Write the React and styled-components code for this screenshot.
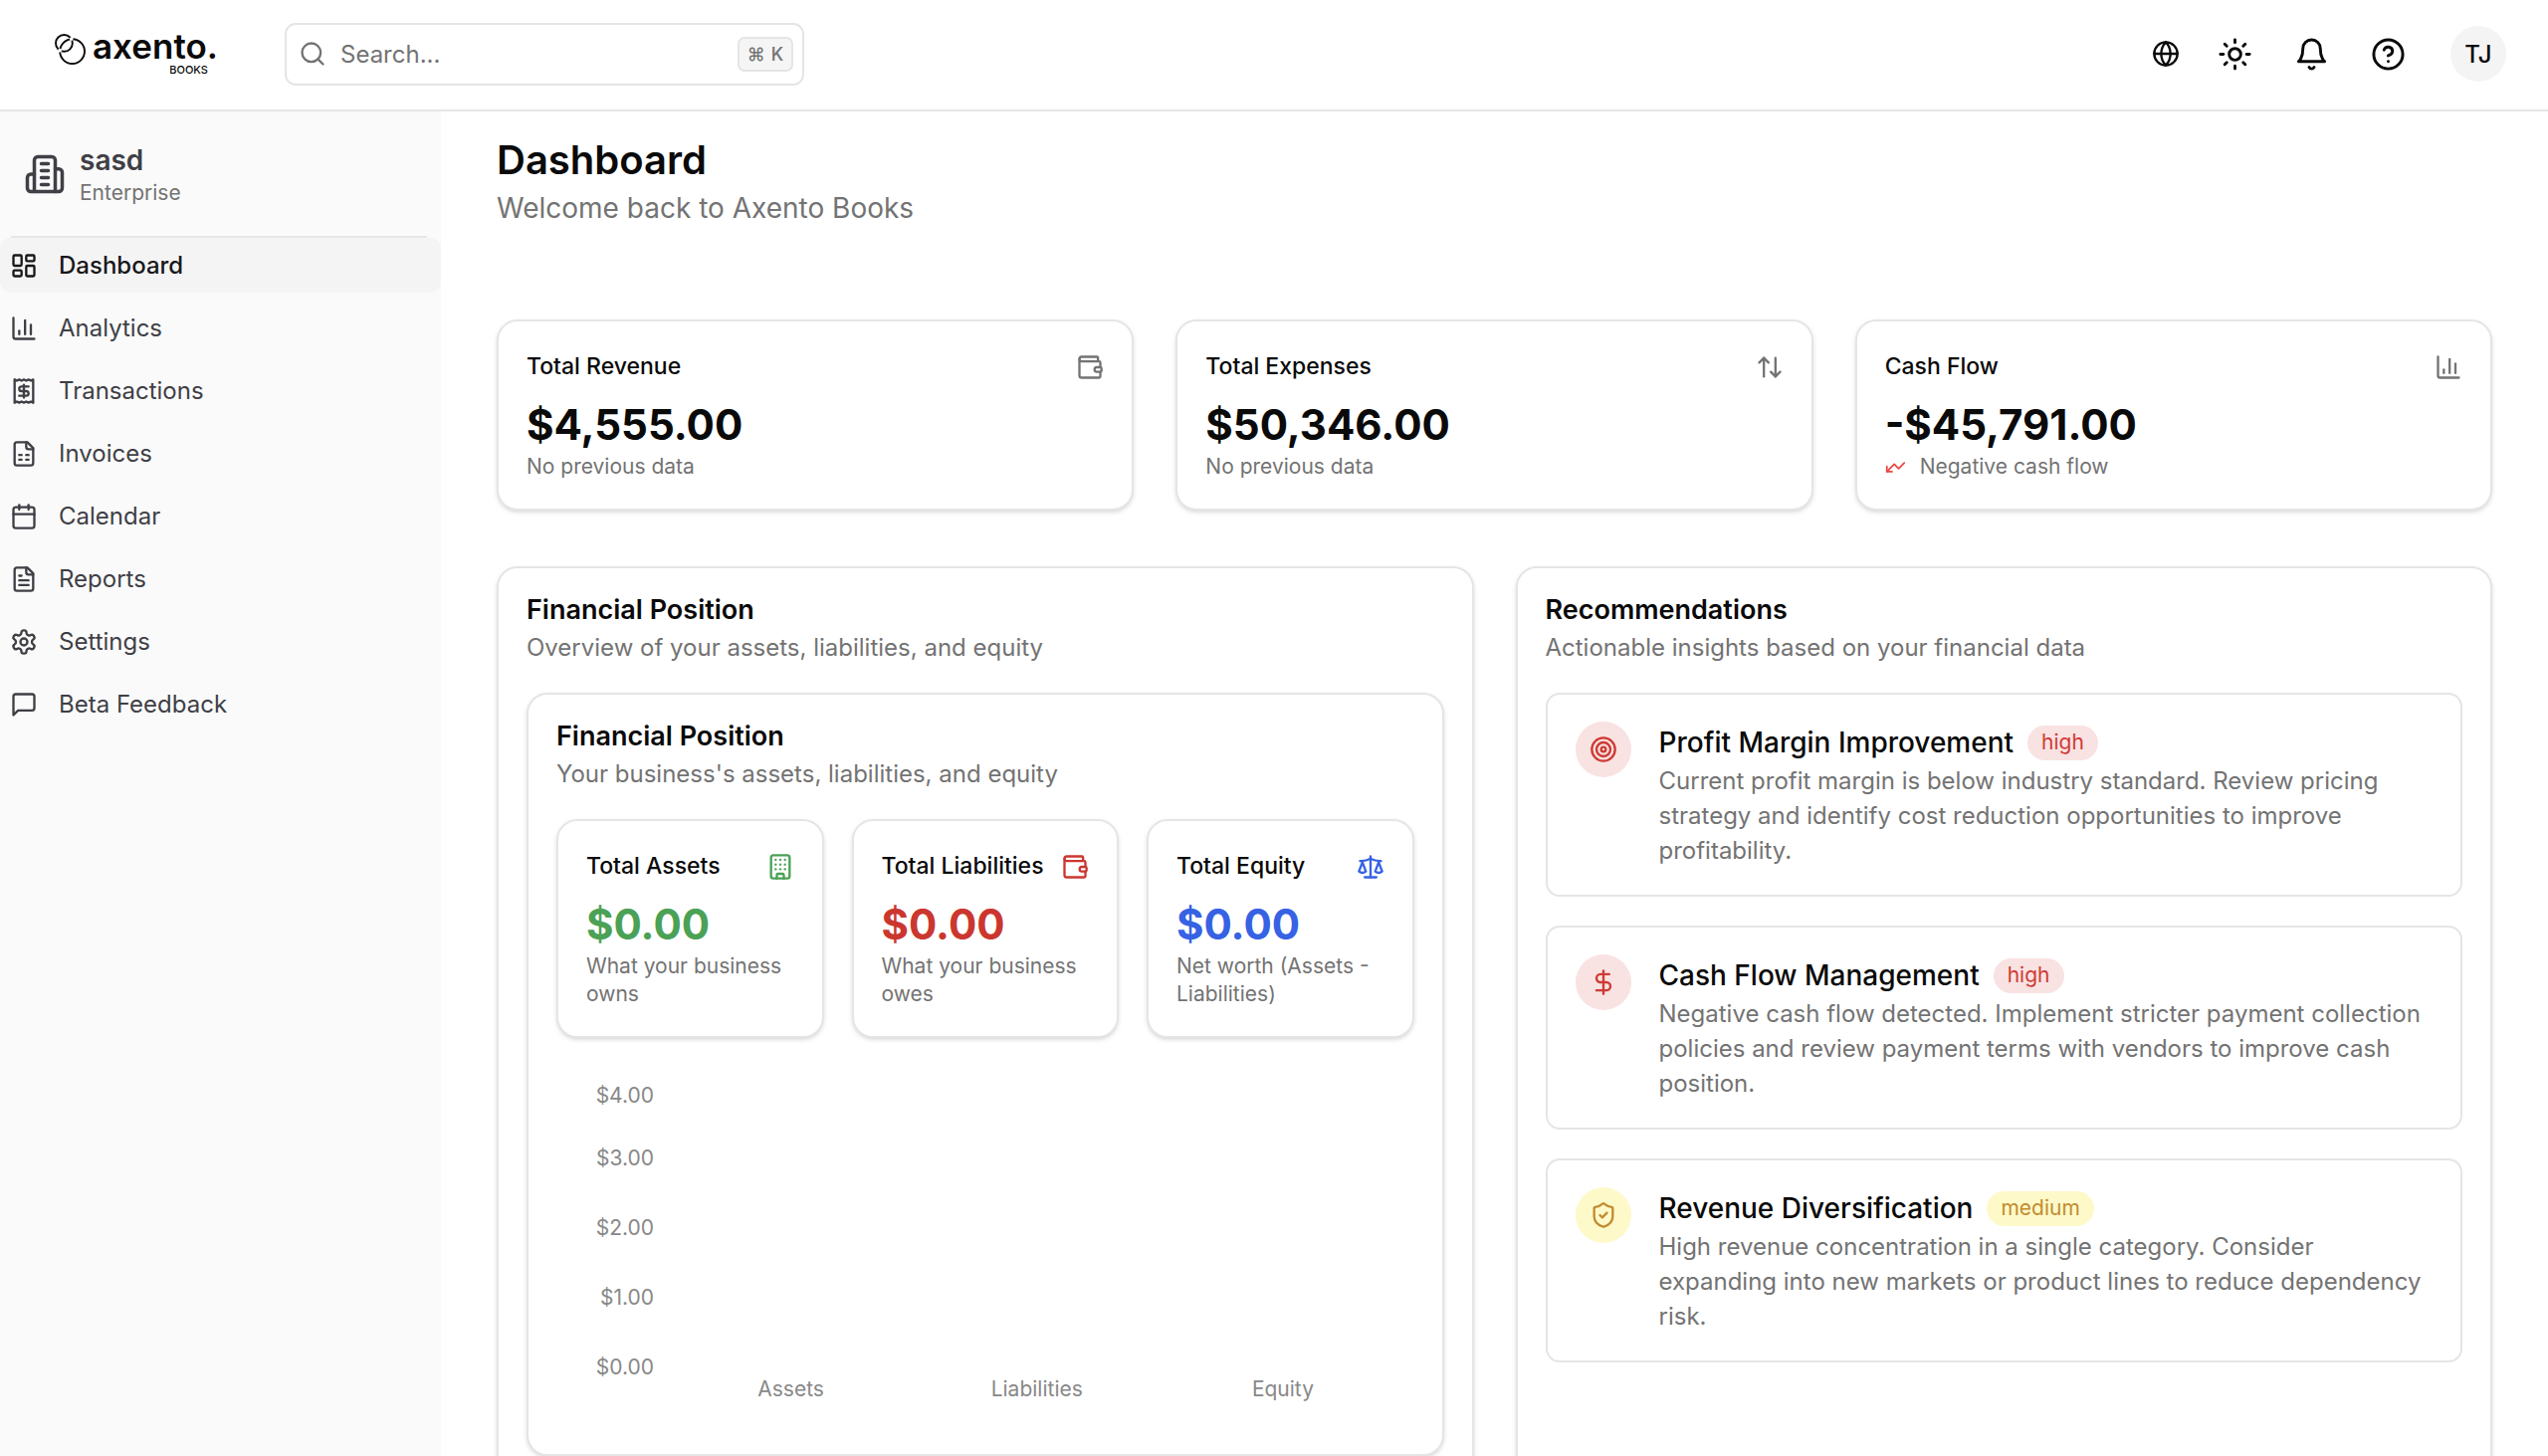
import React, { useCallback, useState } from "react";
import styled, { createGlobalStyle, css } from "styled-components";
import {
  ArrowUpDown,
  Building,
  Calendar,
  ChartColumn,
  CircleHelp,
  DollarSign,
  Globe,
  LayoutDashboard,
  Receipt,
  Scale,
  Search,
  ShieldCheck,
  Sun,
  Target,
  TrendingUp,
  Wallet,
} from "lucide-react";

const GlobalStyle = createGlobalStyle`
  * {
    box-sizing: border-box;
  }
  body {
    margin: 0;
    background: #fff;
    color: #0a0a0a;
    font-family: Inter, "Liberation Sans", sans-serif;
    font-size: 24px;
    line-height: 35px;
  }
  h1, h2, h3, p, ul {
    margin: 0;
    padding: 0;
  }
  svg {
    display: block;
    flex-shrink: 0;
  }
`;

const muted = "#737373";
const border = "#e5e5e5";

const tones = {
  green: "#4ba155",
  red: "#cb372f",
  blue: "#3662e3",
};

const priorities = {
  high: { color: "#cf3a34", background: "#f9e2e2" },
  medium: { color: "#c28c30", background: "#fdf9c9" },
};

/* icons */

const StrokeIcon = ({ size = 28, children }) => (
  <svg
    width={size}
    height={size}
    viewBox="0 0 24 24"
    fill="none"
    stroke="currentColor"
    strokeWidth="2"
    strokeLinecap="round"
    strokeLinejoin="round"
    aria-hidden="true"
  >
    {children}
  </svg>
);

const OfficeIcon = ({ size }) => (
  <StrokeIcon size={size}>
    <path d="M6 22V4a2 2 0 0 1 2-2h8a2 2 0 0 1 2 2v18Z" />
    <path d="M6 12H4a2 2 0 0 0-2 2v6a2 2 0 0 0 2 2h2" />
    <path d="M18 9h2a2 2 0 0 1 2 2v9a2 2 0 0 1-2 2h-2" />
    <path d="M10 6h4M10 10h4M10 14h4M10 18h4" />
  </StrokeIcon>
);

const BellIcon = ({ size }) => (
  <StrokeIcon size={size}>
    <path d="M6 8a6 6 0 0 1 12 0c0 7 3 9 3 9H3s3-2 3-9" />
    <path d="M10.3 21a1.94 1.94 0 0 0 3.4 0" />
  </StrokeIcon>
);

const InvoiceIcon = ({ size }) => (
  <StrokeIcon size={size}>
    <path d="M15 2H6a2 2 0 0 0-2 2v16a2 2 0 0 0 2 2h12a2 2 0 0 0 2-2V7Z" />
    <path d="M14 2v4a2 2 0 0 0 2 2h4" />
    <path d="M8 13h2M14 13h2M8 17h2M14 17h2" />
  </StrokeIcon>
);

const ReportIcon = ({ size }) => (
  <StrokeIcon size={size}>
    <path d="M15 2H6a2 2 0 0 0-2 2v16a2 2 0 0 0 2 2h12a2 2 0 0 0 2-2V7Z" />
    <path d="M14 2v4a2 2 0 0 0 2 2h4" />
    <path d="M10 9H8M16 13H8M16 17H8" />
  </StrokeIcon>
);

const GearIcon = ({ size }) => (
  <StrokeIcon size={size}>
    <path d="M12.22 2h-.44a2 2 0 0 0-2 2v.18a2 2 0 0 1-1 1.73l-.43.25a2 2 0 0 1-2 0l-.15-.08a2 2 0 0 0-2.73.73l-.22.38a2 2 0 0 0 .73 2.73l.15.1a2 2 0 0 1 1 1.72v.51a2 2 0 0 1-1 1.74l-.15.09a2 2 0 0 0-.73 2.73l.22.38a2 2 0 0 0 2.73.73l.15-.08a2 2 0 0 1 2 0l.43.25a2 2 0 0 1 1 1.73V20a2 2 0 0 0 2 2h.44a2 2 0 0 0 2-2v-.18a2 2 0 0 1 1-1.73l.43-.25a2 2 0 0 1 2 0l.15.08a2 2 0 0 0 2.73-.73l.22-.39a2 2 0 0 0-.73-2.73l-.15-.08a2 2 0 0 1-1-1.74v-.5a2 2 0 0 1 1-1.74l.15-.09a2 2 0 0 0 .73-2.73l-.22-.38a2 2 0 0 0-2.73-.73l-.15.08a2 2 0 0 1-2 0l-.43-.25a2 2 0 0 1-1-1.73V4a2 2 0 0 0-2-2z" />
    <circle cx="12" cy="12" r="3" />
  </StrokeIcon>
);

const MessageIcon = ({ size }) => (
  <StrokeIcon size={size}>
    <path d="M21 15a2 2 0 0 1-2 2H7l-4 4V5a2 2 0 0 1 2-2h14a2 2 0 0 1 2 2z" />
  </StrokeIcon>
);

const LogoMark = () => (
  <svg width="31" height="37" viewBox="0 0 31 37" fill="none" aria-hidden="true">
    <g stroke="#0a0a0a" strokeWidth="1.9">
      <circle cx="9.4" cy="9.4" r="8.4" />
      <circle cx="17.6" cy="17.6" r="12.4" />
    </g>
    <circle cx="16.7" cy="5.1" r="1.9" fill="#fff" />
    <circle cx="5.1" cy="16.7" r="1.9" fill="#fff" />
  </svg>
);

/* shell */

const Shell = styled.div`
  display: flex;
  flex-direction: column;
  height: 100vh;
`;

const Header = styled.header`
  display: flex;
  align-items: center;
  justify-content: space-between;
  flex-shrink: 0;
  height: 112px;
  padding: 0 42px 2px 55px;
  border-bottom: 2px solid ${border};
`;

const HeaderGroup = styled.div`
  display: flex;
  align-items: center;
`;

const Logo = styled.a`
  display: flex;
  align-items: center;
  gap: 7px;
  width: 231px;
  padding-bottom: 3px;
  color: #0a0a0a;
  text-decoration: none;
`;

const LogoText = styled.span`
  display: flex;
  flex-direction: column;
  align-items: flex-end;
`;

const LogoName = styled.span`
  font-size: 35px;
  font-weight: 600;
  line-height: 34px;
`;

const LogoProduct = styled.span`
  padding-right: 10px;
  font-size: 11px;
  font-weight: 500;
  line-height: 14px;
`;

const SearchBox = styled.label`
  display: flex;
  align-items: center;
  gap: 14px;
  width: 522px;
  height: 63px;
  padding: 0 9px 0 12px;
  border: 2px solid ${border};
  border-radius: 11px;
  color: ${muted};
`;

const SearchInput = styled.input`
  flex: 1;
  min-width: 0;
  padding: 0;
  border: 0;
  outline: 0;
  background: none;
  color: #0a0a0a;
  font: inherit;

  &::placeholder {
    color: ${muted};
    opacity: 1;
  }
`;

const Shortcut = styled.kbd`
  display: flex;
  align-items: center;
  gap: 6px;
  height: 35px;
  padding: 0 8px;
  border: 2px solid ${border};
  border-radius: 7px;
  background: #f5f5f5;
  font-family: inherit;
  font-size: 18px;
  font-weight: 500;
`;

const IconButton = styled.button`
  display: flex;
  align-items: center;
  justify-content: center;
  width: ${({ $compact }) => ($compact ? 49 : 63)}px;
  height: 63px;
  margin-right: 14px;
  padding: 0;
  border: 0;
  background: none;
  color: #0a0a0a;
  cursor: pointer;
`;

const Avatar = styled.button`
  width: 56px;
  height: 56px;
  margin-left: 17px;
  padding: 0;
  border: 0;
  border-radius: 50%;
  background: #f4f4f4;
  color: #0a0a0a;
  font: inherit;
  font-weight: 500;
  cursor: pointer;
`;

const Body = styled.div`
  display: flex;
  flex: 1;
  min-height: 0;
`;

/* sidebar */

const Sidebar = styled.aside`
  flex-shrink: 0;
  width: 443px;
  background: #fafafa;
  color: #3f3f46;
`;

const Company = styled.div`
  display: flex;
  align-items: center;
  gap: 14px;
  height: 125px;
  padding-left: 24px;
`;

const CompanyInfo = styled.div`
  padding-top: 4px;
`;

const CompanyName = styled.div`
  font-size: 28px;
  font-weight: 600;
  line-height: 35px;
`;

const CompanyPlan = styled.div`
  color: ${muted};
  font-size: 21px;
  line-height: 30px;
`;

const Divider = styled.div`
  height: 2px;
  margin: 0 14px 0 11px;
  background: #e5e7eb;
`;

const NavList = styled.ul`
  display: flex;
  flex-direction: column;
  gap: 8px;
  list-style: none;
`;

const NavLink = styled.a`
  display: flex;
  align-items: center;
  gap: 21px;
  height: 55px;
  padding-left: 10px;
  border-radius: 11px;
  color: inherit;
  text-decoration: none;

  ${({ $active }) =>
    $active &&
    css`
      background: #f4f4f4;
      color: #18181b;
      font-weight: 500;
    `}
`;

/* content */

const Main = styled.main`
  flex: 1;
  min-width: 0;
  padding: 24px 56px 56px;
  overflow-y: auto;
  scrollbar-width: none;
`;

const PageHead = styled.div`
  height: 185px;
`;

const PageTitle = styled.h1`
  font-size: 40px;
  font-weight: 600;
  line-height: 49px;
`;

const PageText = styled.p`
  color: ${muted};
  font-size: 28px;
  line-height: 49px;
`;

const Columns = styled.div`
  display: grid;
  grid-template-columns: repeat(${({ $count }) => $count}, minmax(0, 1fr));
  gap: ${({ $gap = 42 }) => $gap}px;
`;

const Sections = styled(Columns)`
  margin-top: 56px;
`;

const Card = styled.section`
  padding: 28px;
  border: 2px solid ${border};
  border-radius: 21px;
  background: #fff;
  box-shadow: 0 2px 5px rgba(0, 0, 0, 0.1), 0 2px 4px -2px rgba(0, 0, 0, 0.1);
`;

const CardHead = styled.div`
  margin-bottom: 28px;
`;

const CardTitle = styled.h2`
  font-size: 27px;
  font-weight: 600;
  line-height: 28px;
`;

const CardText = styled.p`
  margin-top: 6px;
  color: ${muted};
`;

const StatHead = styled.div`
  display: flex;
  align-items: center;
  justify-content: space-between;
  margin-bottom: 13px;
  color: ${({ $color }) => $color};
`;

const StatTitle = styled.h3`
  color: #0a0a0a;
  font-size: 23px;
  font-weight: 500;
`;

const StatValue = styled.p`
  color: ${({ $color }) => $color};
  font-size: 42px;
  font-weight: 700;
  line-height: 56px;
`;

const StatNote = styled.p`
  display: flex;
  align-items: center;
  gap: 14px;
  color: ${muted};
  font-size: 21px;
  line-height: 28px;

  svg {
    color: #e8483f;
    transform: rotate(180deg);
  }
`;

/* chart */

const Chart = styled.div`
  display: flex;
  align-items: flex-end;
  gap: 14px;
  margin-top: 44px;
  padding: 0 8px 23px 0;
  color: #888;
  font-size: 21px;
  line-height: 28px;
`;

const YAxis = styled.div`
  display: flex;
  flex-direction: column;
  gap: 42px;
  width: 98px;
  padding-bottom: 22px;
  text-align: right;

  & > :first-child {
    margin-bottom: -7px;
  }
`;

const XAxis = styled.div`
  display: grid;
  flex: 1;
  grid-template-columns: repeat(3, 1fr);
  text-align: center;
`;

/* recommendations */

const TipList = styled.ul`
  display: flex;
  flex-direction: column;
  gap: 29px;
  list-style: none;
`;

const Tip = styled.li`
  display: flex;
  align-items: flex-start;
  gap: 28px;
  padding: 27px 28px;
  border: 2px solid ${border};
  border-radius: 14px;
`;

const TipIcon = styled.div`
  display: flex;
  align-items: center;
  justify-content: center;
  flex-shrink: 0;
  width: 56px;
  height: 56px;
  border-radius: 50%;
  color: ${({ $priority }) => priorities[$priority].color};
  background: ${({ $priority }) => priorities[$priority].background};
`;

const TipHead = styled.div`
  display: flex;
  align-items: center;
  gap: 14px;
`;

const TipTitle = styled.h3`
  font-size: 28px;
  font-weight: 500;
  line-height: 42px;
`;

const Badge = styled.span`
  padding: 3px 14px 4px;
  border-radius: 18px;
  color: ${({ $priority }) => priorities[$priority].color};
  background: ${({ $priority }) => priorities[$priority].background};
  font-size: 21px;
  line-height: 28px;
`;

const TipText = styled.p`
  color: ${muted};
`;

const navItems = [
  { label: "Dashboard", Icon: LayoutDashboard },
  { label: "Analytics", Icon: ChartColumn },
  { label: "Transactions", Icon: Receipt },
  { label: "Invoices", Icon: InvoiceIcon },
  { label: "Calendar", Icon: Calendar },
  { label: "Reports", Icon: ReportIcon },
  { label: "Settings", Icon: GearIcon },
  { label: "Beta Feedback", Icon: MessageIcon },
];

const summary = [
  {
    title: "Total Revenue",
    value: "$4,555.00",
    note: "No previous data",
    Icon: Wallet,
  },
  {
    title: "Total Expenses",
    value: "$50,346.00",
    note: "No previous data",
    Icon: ArrowUpDown,
  },
  {
    title: "Cash Flow",
    value: "-$45,791.00",
    note: "Negative cash flow",
    Icon: ChartColumn,
    down: true,
  },
];

const position = [
  {
    title: "Total Assets",
    value: "$0.00",
    note: "What your business owns",
    Icon: Building,
    tone: "green",
  },
  {
    title: "Total Liabilities",
    value: "$0.00",
    note: "What your business owes",
    Icon: Wallet,
    tone: "red",
  },
  {
    title: "Total Equity",
    value: "$0.00",
    note: "Net worth (Assets - Liabilities)",
    Icon: Scale,
    tone: "blue",
  },
];

const tips = [
  {
    title: "Profit Margin Improvement",
    priority: "high",
    Icon: Target,
    text: "Current profit margin is below industry standard. Review pricing strategy and identify cost reduction opportunities to improve profitability.",
  },
  {
    title: "Cash Flow Management",
    priority: "high",
    Icon: DollarSign,
    text: "Negative cash flow detected. Implement stricter payment collection policies and review payment terms with vendors to improve cash position.",
  },
  {
    title: "Revenue Diversification",
    priority: "medium",
    Icon: ShieldCheck,
    text: "High revenue concentration in a single category. Consider expanding into new markets or product lines to reduce dependency risk.",
  },
];

const ticks = ["$4.00", "$3.00", "$2.00", "$1.00", "$0.00"];

const StatCard = ({ title, value, note, Icon, tone, down }) => (
  <Card>
    <StatHead $color={tone ? tones[tone] : muted}>
      <StatTitle>{title}</StatTitle>
      <Icon size={28} />
    </StatHead>
    <StatValue $color={tone ? tones[tone] : "#0a0a0a"}>{value}</StatValue>
    <StatNote>
      {down && <TrendingUp size={21} />}
      {note}
    </StatNote>
  </Card>
);

const TopBar = () => {
  const [query, setQuery] = useState("");
  const onChangeQuery = useCallback((e) => {
    setQuery(e.target.value);
  }, []);

  return (
    <Header>
      <HeaderGroup>
        <Logo href="#">
          <LogoMark />
          <LogoText>
            <LogoName>axento.</LogoName>
            <LogoProduct>BOOKS</LogoProduct>
          </LogoText>
        </Logo>
        <SearchBox>
          <Search size={28} />
          <SearchInput
            type="text"
            aria-label="Search"
            placeholder="Search..."
            value={query}
            onChange={onChangeQuery}
          />
          <Shortcut>
            <span>⌘</span>
            <span>K</span>
          </Shortcut>
        </SearchBox>
      </HeaderGroup>
      <HeaderGroup>
        <IconButton type="button" aria-label="Language" $compact>
          <Globe size={28} />
        </IconButton>
        <IconButton type="button" aria-label="Theme">
          <Sun size={35} />
        </IconButton>
        <IconButton type="button" aria-label="Notifications">
          <BellIcon size={35} />
        </IconButton>
        <IconButton type="button" aria-label="Help">
          <CircleHelp size={35} />
        </IconButton>
        <Avatar type="button">TJ</Avatar>
      </HeaderGroup>
    </Header>
  );
};

const SideNav = () => (
  <Sidebar>
    <Company>
      <OfficeIcon size={42} />
      <CompanyInfo>
        <CompanyName>sasd</CompanyName>
        <CompanyPlan>Enterprise</CompanyPlan>
      </CompanyInfo>
    </Company>
    <Divider />
    <nav>
      <NavList>
        {navItems.map(({ label, Icon }) => (
          <li key={label}>
            <NavLink href="#" $active={label === "Dashboard"}>
              <Icon size={28} />
              {label}
            </NavLink>
          </li>
        ))}
      </NavList>
    </nav>
  </Sidebar>
);

const FinancialPosition = () => (
  <Card>
    <CardHead>
      <CardTitle>Financial Position</CardTitle>
      <CardText>Overview of your assets, liabilities, and equity</CardText>
    </CardHead>
    <Card>
      <CardHead>
        <CardTitle>Financial Position</CardTitle>
        <CardText>Your business's assets, liabilities, and equity</CardText>
      </CardHead>
      <Columns $count={3} $gap={28}>
        {position.map((item) => (
          <StatCard key={item.title} {...item} />
        ))}
      </Columns>
      <Chart>
        <YAxis>
          {ticks.map((tick) => (
            <span key={tick}>{tick}</span>
          ))}
        </YAxis>
        <XAxis>
          <span>Assets</span>
          <span>Liabilities</span>
          <span>Equity</span>
        </XAxis>
      </Chart>
    </Card>
  </Card>
);

const Recommendations = () => (
  <Card>
    <CardHead>
      <CardTitle>Recommendations</CardTitle>
      <CardText>Actionable insights based on your financial data</CardText>
    </CardHead>
    <TipList>
      {tips.map(({ title, priority, Icon, text }) => (
        <Tip key={title}>
          <TipIcon $priority={priority}>
            <Icon size={28} />
          </TipIcon>
          <div>
            <TipHead>
              <TipTitle>{title}</TipTitle>
              <Badge $priority={priority}>{priority}</Badge>
            </TipHead>
            <TipText>{text}</TipText>
          </div>
        </Tip>
      ))}
    </TipList>
  </Card>
);

const App = () => (
  <>
    <GlobalStyle />
    <Shell>
      <TopBar />
      <Body>
        <SideNav />
        <Main>
          <PageHead>
            <PageTitle>Dashboard</PageTitle>
            <PageText>Welcome back to Axento Books</PageText>
          </PageHead>
          <Columns $count={3}>
            {summary.map((item) => (
              <StatCard key={item.title} {...item} />
            ))}
          </Columns>
          <Sections $count={2}>
            <FinancialPosition />
            <Recommendations />
          </Sections>
        </Main>
      </Body>
    </Shell>
  </>
);

export default App;
